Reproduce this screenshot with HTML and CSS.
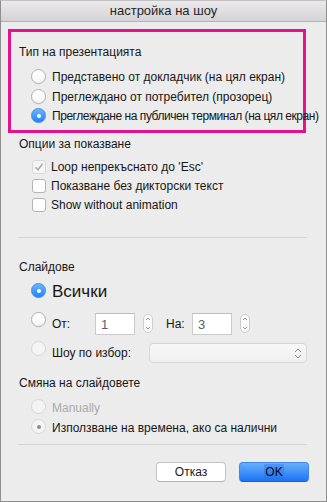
FILE: index.html
```html
<!DOCTYPE html>
<html lang="bg">

<head>
  <meta charset="UTF-8" />
  <meta name="viewport" content="width=device-width, initial-scale=1" />
  <title>настройка на шоу</title>
  <link rel="stylesheet" href="styles.css">
</head>

<body>

  <div class="window">
    <div class="titlebar">настройка на шоу</div>

    <section class="group highlight">
      <div class="group-title">Тип на презентацията</div>
      <div class="options radios">
        <div class="opt"><span class="radio"></span>Представено от докладчик (на цял екран)</div>
        <div class="opt"><span class="radio"></span>Преглеждано от потребител (прозорец)</div>
        <div class="opt tight"><span class="radio on"></span>Преглеждане на публичен терминал (на цял екран)</div>
      </div>
    </section>

    <section class="group show-opts">
      <div class="group-title">Опции за показване</div>
      <div class="options checks">
        <div class="opt">
          <span class="check disabled">
            <svg width="10" height="10" viewBox="0 0 10 10"><path d="M1.5 5.2 L4 7.8 L8.6 1.6" fill="none" stroke="#a9a9a9" stroke-width="1.5" /></svg>
          </span>Loop непрекъснато до 'Esc'
        </div>
        <div class="opt"><span class="check"></span>Показване без дикторски текст</div>
        <div class="opt"><span class="check"></span>Show without animation</div>
      </div>
    </section>

    <hr class="sep">

    <section class="group slides">
      <div class="group-title">Слайдове</div>
      <div class="options">
        <div class="opt big"><span class="radio on"></span>Всички</div>
        <div class="row">
          <span class="radio"></span>
          <span class="row-label from">От:</span>
          <span class="field">1</span>
          <span class="stepper">
            <svg width="10" height="19" viewBox="0 0 10 19"><rect x="0.5" y="0.5" width="9" height="18" rx="4.5" fill="#fbfbfb" stroke="#cdcdcd" /><path d="M3 6 L5 4 L7 6 M3 13 L5 15 L7 13" fill="none" stroke="#8c8c8c" stroke-width="0.9" /></svg>
          </span>
          <span class="row-label to">На:</span>
          <span class="field">3</span>
          <span class="stepper">
            <svg width="10" height="19" viewBox="0 0 10 19"><rect x="0.5" y="0.5" width="9" height="18" rx="4.5" fill="#fbfbfb" stroke="#cdcdcd" /><path d="M3 6 L5 4 L7 6 M3 13 L5 15 L7 13" fill="none" stroke="#8c8c8c" stroke-width="0.9" /></svg>
          </span>
        </div>
        <div class="row custom">
          <span class="radio disabled"></span>
          <span class="row-label pick">Шоу по избор:</span>
          <span class="popup">
            <svg width="8" height="13" viewBox="0 0 8 13"><path d="M1 5 L4 2 L7 5 M1 8 L4 11 L7 8" fill="none" stroke="#8a8a8a" stroke-width="1" /></svg>
          </span>
        </div>
      </div>
    </section>

    <section class="group advance">
      <div class="group-title">Смяна на слайдовете</div>
      <div class="options radios">
        <div class="opt muted"><span class="radio disabled"></span>Manually</div>
        <div class="opt"><span class="radio disabled dot"></span>Използване на времена, ако са налични</div>
      </div>
    </section>

    <hr class="sep bottom">

    <div class="buttons">
      <button class="btn">Отказ</button>
      <button class="btn primary"><span class="ok-text">OK</span></button>
    </div>
  </div>

</body>
</html>
```

FILE: styles.css
```css
* {
  box-sizing: border-box;
}

body {
  margin: 0;
  font-family: "Liberation Sans", Arial, sans-serif;
  font-size: 12px;
  color: #161616;
  background: #ececec;
}

.window {
  width: 327px;
  height: 502px;
  border: 1px solid #8e8e8e;
  border-top-color: #c2c2c2;
  background: #ececec;
}

.titlebar {
  height: 21px;
  line-height: 20px;
  text-align: center;
  font-size: 13px;
  color: #262626;
  background: linear-gradient(#ebe9eb, #d5d3d5);
  border-bottom: 1px solid #b3b3b3;
}

.group {
  padding-left: 18px;
}

.group-title {
  line-height: 15px;
}

.highlight {
  width: 298px;
  margin: 7px 0 0 7px;
  padding: 13px 0 3.5px 8px;
  border: 3px solid #e5128d;
}

.options {
  padding-left: 12px;
  margin-top: 8px;
}

.opt {
  display: flex;
  align-items: flex-start;
  line-height: 19.5px;
  white-space: nowrap;
}

.opt.tight {
  letter-spacing: -0.45px;
}

.radio {
  flex: none;
  width: 15px;
  height: 15px;
  margin: 1px 6px 0 0;
  border-radius: 50%;
  border: 1px solid #b1b1b1;
  background: linear-gradient(#ffffff, #f6f6f6);
  box-shadow: 0 0.5px 0.5px rgba(0, 0, 0, 0.08);
  position: relative;
}

.radio.on {
  border-color: #3a8cf2;
  background: linear-gradient(#6db4fb, #1d85fb);
}

.radio.on::after,
.radio.dot::after {
  content: "";
  position: absolute;
  left: 4.5px;
  top: 4.5px;
  width: 4px;
  height: 4px;
  border-radius: 50%;
  background: #fff;
}

.radio.disabled {
  border-color: #d6d6d6;
  background: #f4f4f4;
  box-shadow: none;
}

.radio.dot::after {
  background: #8f8f8f;
}

/* опции за показване */
.show-opts {
  margin-top: 4px;
}

.checks {
  margin-top: 6px;
}

.checks .opt {
  line-height: 19px;
}

.check {
  flex: none;
  display: flex;
  align-items: center;
  justify-content: center;
  width: 14px;
  height: 14px;
  margin: 2px 5px 0 1px;
  border-radius: 3px;
  border: 1px solid #b4b4b4;
  background: #fff;
}

.check.disabled {
  border-color: #d7d7d7;
  background: #f5f5f5;
}

.sep {
  height: 1px;
  width: 289px;
  margin: 22px 0 0 17px;
  border: none;
  background: #d4d4d4;
}

/* слайдове */
.slides {
  margin-top: 22px;
}

.slides .options {
  margin-top: 6px;
}

.opt.big {
  font-size: 17px;
  line-height: 22px;
}

.opt.big .radio {
  margin-top: 2px;
}

.row {
  display: flex;
  align-items: flex-start;
  height: 24px;
  margin-top: 8px;
}

.row .radio {
  margin-top: 0.5px;
}

.row-label {
  line-height: 15px;
  margin-top: 6px;
  white-space: nowrap;
}

.row-label.from {
  width: 43px;
}

.row-label.to {
  margin-left: 13px;
  width: 26px;
}

.row-label.pick {
  width: 97px;
}

.field {
  width: 40px;
  height: 22px;
  margin-top: 2px;
  padding-left: 5px;
  font-size: 13px;
  line-height: 21px;
  color: #5a5e66;
  background: #fff;
  border: 1px solid #cbcbcb;
  border-top-color: #bdbdbd;
}

.stepper {
  display: flex;
  margin: 3px 0 0 8px;
}

.row.custom {
  margin-top: 5px;
}

.popup {
  display: flex;
  align-items: center;
  justify-content: flex-end;
  width: 158px;
  height: 20px;
  margin-top: 3px;
  padding-right: 4px;
  border: 1px solid #d6d6d6;
  border-radius: 4px;
  background: linear-gradient(#f7f7f7, #f0f0f0);
}

/* смяна на слайдовете */
.advance {
  margin-top: 12px;
}

.advance .options {
  margin-top: 6.5px;
}

.advance .opt {
  line-height: 20px;
}

.advance .radio {
  margin-top: 1.5px;
}

.opt.muted {
  color: #a9a9a9;
}

.sep.bottom {
  margin-top: 6px;
}

.buttons {
  display: flex;
  justify-content: flex-end;
  gap: 13px;
  margin-top: 17px;
  padding-right: 17px;
}

.btn {
  width: 70px;
  height: 20px;
  padding: 0;
  font-family: inherit;
  font-size: 12px;
  color: #1a1a1a;
  background: #fff;
  border: 1px solid #c4c4c4;
  border-bottom-color: #b0b0b0;
  border-radius: 4px;
}

.btn.primary {
  background: linear-gradient(#68b0fa, #1c74f6);
  border-color: #3f86ee;
  border-bottom-color: #1f5fd6;
  color: #0c0c0c;
}

.ok-text {
  padding: 1px 1px;
  background: rgba(40, 110, 230, 0.35);
}
```
